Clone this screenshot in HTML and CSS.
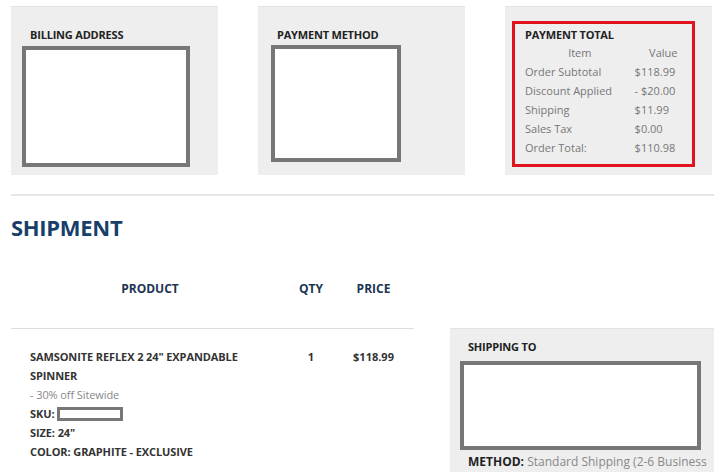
FILE: index.html
```html
<!DOCTYPE html>
<html lang="en">
<head>
    <meta charset="UTF-8">
    <meta name="viewport" content="width=device-width, initial-scale=1.0">
    <title>Order Review</title>
    <link rel="stylesheet" href="styles.css">
</head>
<body>
    <div class="summary">
        <div class="card billing">
            <h3>BILLING ADDRESS</h3>
            <div class="redacted"></div>
        </div>
        <div class="card payment">
            <h3>PAYMENT METHOD</h3>
            <div class="redacted"></div>
        </div>
        <div class="card totals">
            <div class="totals-box">
                <h3>PAYMENT TOTAL</h3>
                <table class="totals-table">
                    <thead>
                        <tr><th>Item</th><th>Value</th></tr>
                    </thead>
                    <tbody>
                        <tr><td>Order Subtotal</td><td>$118.99</td></tr>
                        <tr><td>Discount Applied</td><td>- $20.00</td></tr>
                        <tr><td>Shipping</td><td>$11.99</td></tr>
                        <tr><td>Sales Tax</td><td>$0.00</td></tr>
                        <tr><td>Order Total:</td><td>$110.98</td></tr>
                    </tbody>
                </table>
            </div>
        </div>
    </div>

    <hr class="divider">

    <h2 class="section-title">SHIPMENT</h2>

    <div class="shipment-head">
        <div class="col-product">PRODUCT</div>
        <div class="col-qty">QTY</div>
        <div class="col-price">PRICE</div>
    </div>

    <div class="shipment-body">
        <div class="item-row">
            <div class="col-product item-info">
                <div class="item-name">SAMSONITE REFLEX 2 24" EXPANDABLE SPINNER</div>
                <div class="item-promo">- 30% off Sitewide</div>
                <div class="item-attr">SKU: <span class="sku-box"></span></div>
                <div class="item-attr">SIZE: 24"</div>
                <div class="item-attr">COLOR: GRAPHITE - EXCLUSIVE</div>
            </div>
            <div class="col-qty item-val">1</div>
            <div class="col-price item-val">$118.99</div>
        </div>
        <div class="card shipping">
            <h3>SHIPPING TO</h3>
            <div class="redacted"></div>
            <p class="method"><span class="method-label">METHOD:</span> <span>Standard Shipping (2-6 Business</span></p>
        </div>
    </div>
</body>
</html>
```

FILE: styles.css
```css
body {
    font-family: "Open Sans", Arial, sans-serif;
    color: #333;
    background-color: #fff;
    margin: 0;
    padding: 6px 6px 0 11px;
    overflow: hidden;
}

h3 {
    margin: 0;
    font-size: 11px;
    line-height: 16px;
    font-weight: 700;
    color: #222;
    letter-spacing: -0.2px;
}

.summary {
    display: grid;
    grid-template-columns: 207px 207px 207px;
    column-gap: 40px;
}

.card {
    background-color: #eee;
    border-top: 1px solid #e3e3e3;
    box-sizing: border-box;
}

.summary .card {
    height: 169px;
}

.redacted {
    background-color: #fff;
    border: 4px solid #777;
    box-sizing: border-box;
}

.billing {
    padding: 20px 0 0 11px;
}

.billing h3 {
    padding-left: 8px;
}

.billing .redacted {
    margin-top: 3px;
    width: 168px;
    height: 121px;
}

.payment {
    padding: 20px 0 0 13px;
}

.payment h3 {
    padding-left: 6px;
}

.payment .redacted {
    margin-top: 2px;
    width: 130px;
    height: 117px;
}

.totals {
    padding: 14px 0 0 7px;
}

.totals-box {
    width: 183px;
    height: 146px;
    box-sizing: border-box;
    border: 3px solid #e0141e;
    padding: 3px 0 0 10px;
}

.totals-table {
    border-collapse: collapse;
    font-size: 11px;
    color: #777;
}

.totals-table th,
.totals-table td {
    padding: 0;
    height: 19px;
    line-height: 19px;
    font-weight: 400;
    text-align: left;
}

.totals-table th {
    text-align: center;
}

.totals-table th:first-child,
.totals-table td:first-child {
    width: 112px;
}

.totals-table th:last-child {
    width: 58px;
}

.divider {
    border: none;
    border-top: 2px solid #e6e6e6;
    margin: 19px 0 0 0;
    width: 703px;
}

.section-title {
    margin: 16px 0 0 0;
    font-size: 22px;
    line-height: 30px;
    font-weight: 700;
    color: #183f6a;
    letter-spacing: -0.3px;
}

.shipment-head {
    display: flex;
    width: 403px;
    padding: 37px 0 29px 0;
    border-bottom: 1px solid #ddd;
    font-size: 12px;
    line-height: 20px;
    font-weight: 700;
    color: #1c3553;
    text-align: center;
}

.col-product {
    width: 278px;
}

.col-qty {
    width: 44px;
}

.col-price {
    width: 81px;
}

.shipment-body {
    display: flex;
    column-gap: 36px;
}

.item-row {
    display: flex;
    width: 403px;
    padding-top: 18px;
    font-size: 11px;
    line-height: 19px;
    font-weight: 700;
    color: #333;
}

.item-info {
    box-sizing: border-box;
    padding: 0 28px 0 19px;
    letter-spacing: -0.1px;
}

.item-promo {
    font-weight: 400;
    color: #888;
}

.sku-box {
    display: inline-block;
    vertical-align: middle;
    width: 66px;
    height: 14px;
    box-sizing: border-box;
    background-color: #fff;
    border: 3px solid #777;
    margin-top: -3px;
}

.item-val {
    text-align: center;
}

.shipping {
    width: 264px;
    height: 160px;
    margin-top: -1px;
    padding: 8px 0 0 10px;
}

.shipping h3 {
    padding-left: 8px;
    line-height: 19px;
}

.shipping .redacted {
    margin-top: 5px;
    width: 241px;
    height: 89px;
}

.method {
    margin: 3px 0 0 0;
    padding-left: 8px;
    font-size: 12px;
    line-height: 18px;
    color: #888;
    white-space: nowrap;
}

.method-label {
    font-weight: 700;
    color: #222;
}
```
